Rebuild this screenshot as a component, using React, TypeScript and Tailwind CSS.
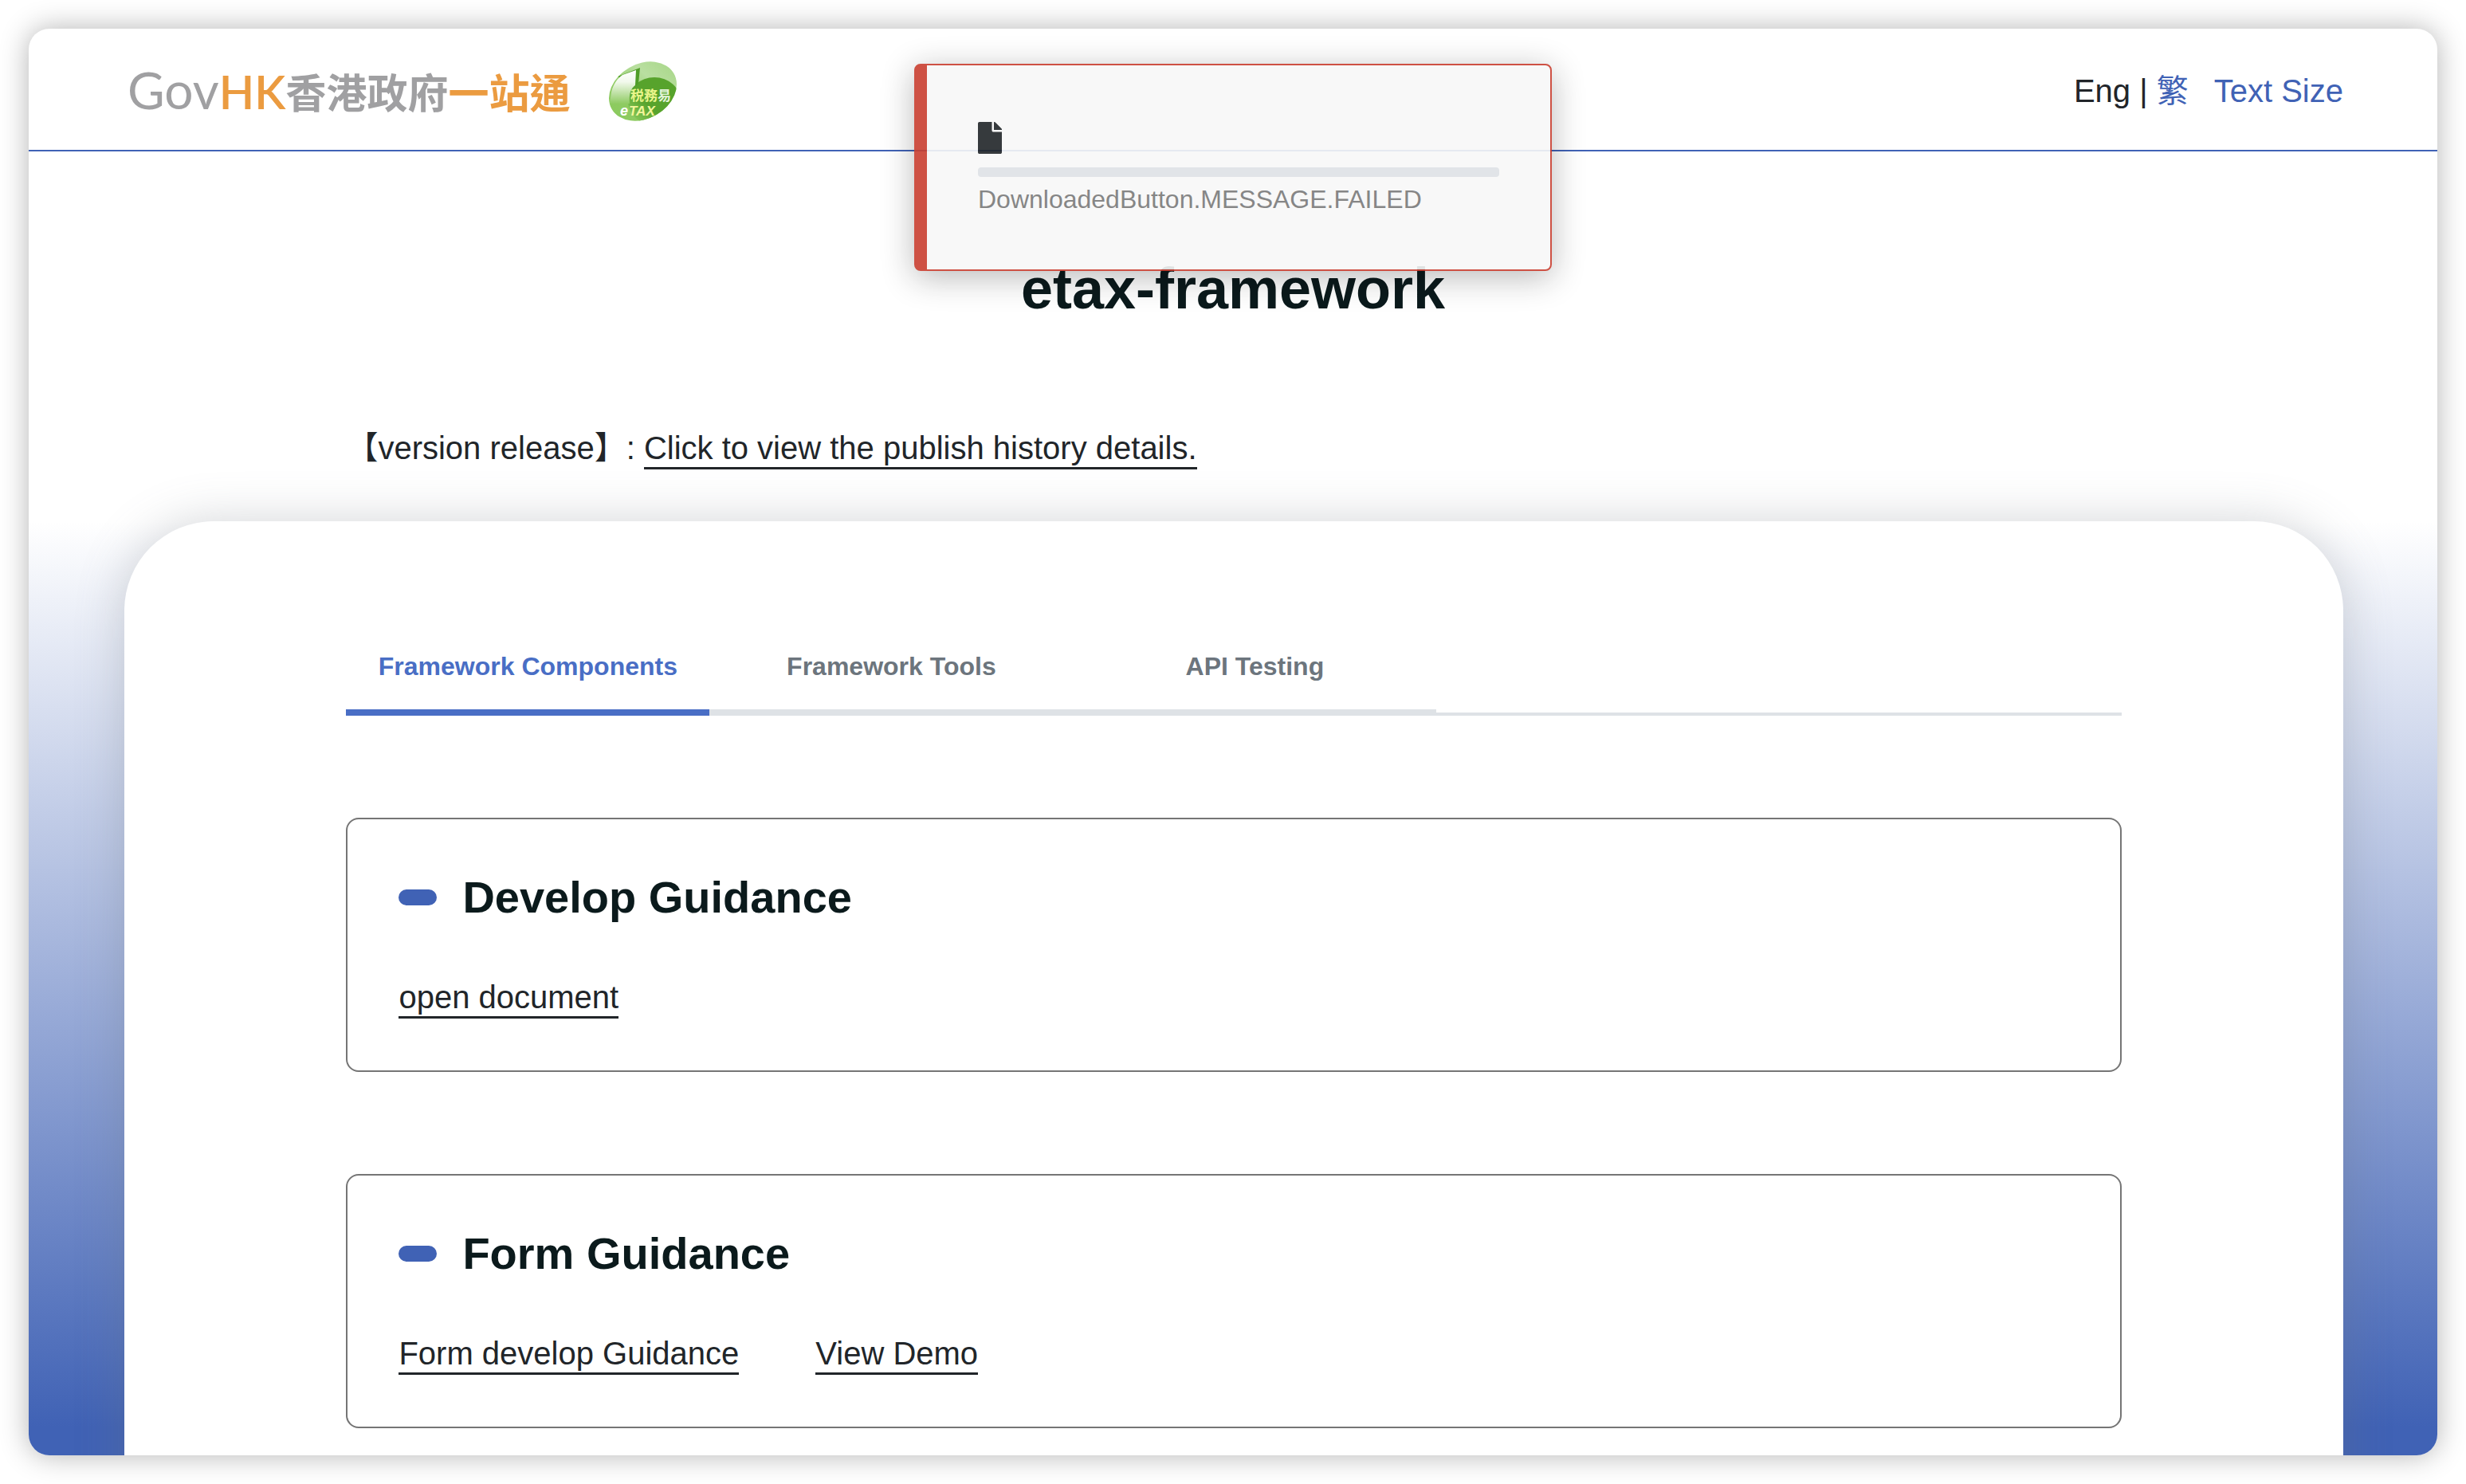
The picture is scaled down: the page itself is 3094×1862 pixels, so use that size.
import React, { useState } from "react";

function GovLogo() {
  return (
    <a href="#home" className="flex items-center whitespace-nowrap">
      <span className="font-[Lato,sans-serif] text-[64px] leading-[72px] text-[#a0a0a2]">
        Gov<span className="text-[58px] font-semibold text-[#eb9b40]">HK</span>
      </span>
      <span className="font-['Noto_Sans_CJK_TC',sans-serif] text-[51px] font-bold leading-[72px] text-[#a0a0a2]">
        香港政府<span className="text-[#eb9b40]">一站通</span>
      </span>
    </a>
  );
}

function TaxLogo() {
  return (
    <a href="#etax" className="block">
      <svg width="90" height="80" viewBox="0 -2 90 80" role="img" aria-label="eTAX">
        <defs>
          <linearGradient id="leaf" x1="1" y1="0" x2="0" y2="1">
            <stop offset="0" stopColor="#a5d584" />
            <stop offset="0.35" stopColor="#b9dfa0" />
            <stop offset="0.65" stopColor="#8fcb63" />
            <stop offset="1" stopColor="#8aca5c" />
          </linearGradient>
          <linearGradient id="shine" x1="0" y1="0" x2="0" y2="1">
            <stop offset="0" stopColor="#ffffff" />
            <stop offset="0.35" stopColor="#f2f9ec" />
            <stop offset="1" stopColor="#8fcb63" />
          </linearGradient>
          <linearGradient id="core" x1="0" y1="1" x2="1" y2="0">
            <stop offset="0.1" stopColor="#8aca5c" />
            <stop offset="0.4" stopColor="#57a32c" />
            <stop offset="1" stopColor="#57a32c" />
          </linearGradient>
          <clipPath id="disc">
            <ellipse cx="43.500" cy="38.500" rx="44.900" ry="34.200" transform="rotate(-30 43.5 38.5)" />
          </clipPath>
        </defs>
        <g clipPath="url(#disc)">
          <rect width="90" height="80" fill="url(#leaf)" />
          <ellipse cx="58" cy="51" rx="33" ry="30" fill="url(#core)" />
          <path d="M12 20L40 9L38 29L33 33Z" fill="#4f9d28" />
          <path d="M4 40C6 30 12 22 18 18L35 12L34 31C28 35 26 42 27 54H2Z" fill="url(#shine)" />
        </g>
        <text x="28" y="50" fontSize="17" className="font-['Noto_Sans_CJK_TC',sans-serif] font-bold" fill="#e9f58a">
          税務<tspan fill="#e4f3da">易</tspan>
        </text>
        <g className="font-['Liberation_Sans',sans-serif] font-bold italic">
          <text x="15" y="69" fontSize="18" fill="#ffffff">e</text>
          <text x="26" y="69" fontSize="17" fill="#f3f59a">TAX</text>
        </g>
      </svg>
    </a>
  );
}

function Toast() {
  return (
    <div
      role="alert"
      className="absolute left-1/2 top-20 flex h-[260px] w-[800px] -translate-x-1/2 flex-col rounded-lg border-2 border-l-16 border-[#c93f30] bg-[#f8f8f8] px-16 pt-[71px] opacity-90 shadow-[0_8px_40px_rgba(0,0,0,0.3)]"
    >
      <svg width="30" height="40" viewBox="0 0 384 512" fill="#212529" aria-hidden="true">
        <path d="M224 136V0H24C10.700 0 0 10.700 0 24v464c0 13.300 10.700 24 24 24h336c13.300 0 24-10.700 24-24V160H248c-13.200 0-24-10.800-24-24zm160-14.100v6.100H256V0h6.100c6.400 0 12.500 2.500 17 7l97.900 98c4.500 4.500 7 10.600 7 16.900z" />
      </svg>
      <div className="mt-[17px] h-3 rounded-sm bg-[#dee2e6]" />
      <p className="mt-2 text-[32px] leading-10 text-[#7a7a7a]">DownloadedButton.MESSAGE.FAILED</p>
    </div>
  );
}

function UnderlinedLink({ children }: { children: React.ReactNode }) {
  return (
    <a href="#open" className="inline-block border-b-3 border-[#212529] pb-px leading-[46px]">
      {children}
    </a>
  );
}

function Card({ title, links }: { title: string; links: string[] }) {
  return (
    <section className="mt-32 rounded-2xl border-2 border-[#757575] px-16 pb-[65px] pt-[62px]">
      <h2 className="flex items-center gap-8 text-[56px] font-bold leading-[72px] text-[#0b1a1c]">
        <span className="h-5 w-12 rounded-[10px] bg-[#4062b5]" />
        {title}
      </h2>
      <div className="mt-[66px] flex gap-24">
        {links.map((link) => (
          <UnderlinedLink key={link}>{link}</UnderlinedLink>
        ))}
      </div>
    </section>
  );
}

const tabs = ["Framework Components", "Framework Tools", "API Testing"];

export default function App() {
  const [active, setActive] = useState(0);
  return (
    <div className="relative h-screen bg-white p-9 font-['Liberation_Sans','Noto_Sans_CJK_TC',sans-serif] text-[40px] text-[#212529]">
      <div className="flex h-full flex-col overflow-hidden rounded-[26px] shadow-[0_0_36px_rgba(0,0,0,0.3)]">
        <header className="flex h-[154px] shrink-0 items-center justify-between border-b-2 border-[#4062b5] pl-[120px] pr-[118px] pt-1">
          <div className="flex items-center gap-12 pl-1">
            <GovLogo />
            <TaxLogo />
          </div>
          <nav className="flex items-center leading-[46px]">
            <span className="whitespace-pre">Eng | </span>
            <a href="#zh" className="text-[#4062b5]">繁</a>
            <button type="button" className="ml-8 text-[#4062b5]">Text Size</button>
          </nav>
        </header>
        <main className="flex min-h-0 flex-1 flex-col">
          <h1 className="mt-[130px] shrink-0 text-center text-[72px] font-bold leading-[84px] text-[#0b1a1c]">
            etax-framework
          </h1>
          <div className="mb-[65px] mt-[135px] shrink-0 pl-[120px] pr-[118px]">
            <p className="px-[10%] leading-[46px]">
              【version release】: <UnderlinedLink>Click to view the publish history details.</UnderlinedLink>
            </p>
          </div>
          <div className="min-h-0 flex-1 bg-linear-to-b/srgb from-white to-[#4062b5] to-97% pl-[120px] pr-[118px]">
            <div className="rounded-t-[112px] bg-white px-[10%] pb-32 pt-32 shadow-[0_0_60px_rgba(108,117,125,0.3)]">
              <div role="tablist" className="flex border-b-4 border-[#dee2e6]">
                {tabs.map((tab, i) => (
                  <button
                    key={tab}
                    type="button"
                    role="tab"
                    aria-selected={i === active}
                    onClick={() => setActive(i)}
                    className={`-mb-1 w-[456px] border-b-8 py-9 text-[32px] font-bold leading-9 ${
                      i === active ? "border-[#496ec5] text-[#496ec5]" : "border-[#dee2e6] text-[#6c757d]"
                    }`}
                  >
                    {tab}
                  </button>
                ))}
              </div>
              <Card title="Develop Guidance" links={["open document"]} />
              <Card title="Form Guidance" links={["Form develop Guidance", "View Demo"]} />
            </div>
          </div>
        </main>
      </div>
      <Toast />
    </div>
  );
}
